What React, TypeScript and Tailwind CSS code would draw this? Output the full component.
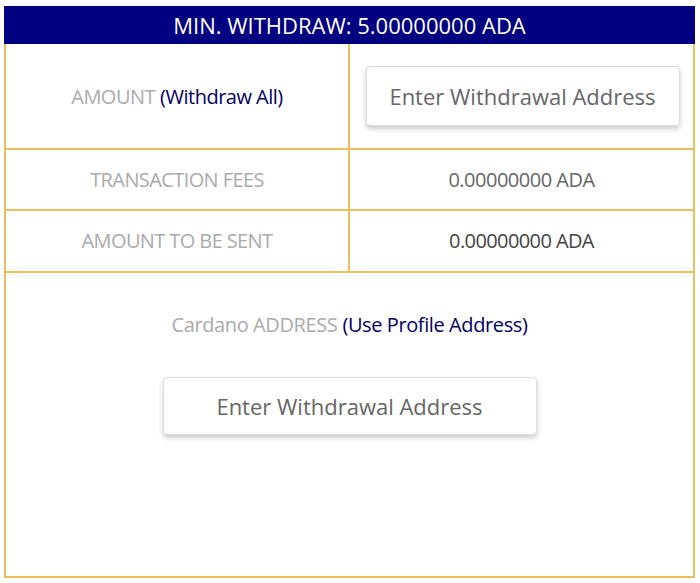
import React from "react";

const font = { fontFamily: '"Open Sans", "Noto Sans", sans-serif' };

export default function App() {
  return (
    <div className="bg-white w-[700px] h-[583px] pt-[6px] pl-[4px]" style={font}>
      <div className="w-[691px]">
        <div className="h-[38px] bg-[#000080] flex items-center justify-center text-white text-[22px] tracking-[0px]">
          MIN. WITHDRAW: 5.00000000 ADA
        </div>
        <div className="border-2 border-t-0 border-[#eebf5e]">
          <div className="grid grid-cols-[344px_1fr] border-b-2 border-[#eebf5e] h-[106px]">
            <div className="border-r-2 border-[#eebf5e] flex items-center justify-center text-[20px] tracking-[-0.5px] pt-[2px]">
              <span className="text-[#aaaaaa]">AMOUNT</span>
              <span className="text-[#000066] font-medium ml-[5px] tracking-[-0.5px]">(Withdraw All)</span>
            </div>
            <div className="flex items-center justify-center">
              <div className="w-[314px] h-[60px] rounded-[4px] border border-[#dddddd] bg-white shadow-[0_3px_5px_rgba(0,0,0,0.2)] flex items-center justify-center text-[22px] text-[#666666] ml-[2px]">
                Enter Withdrawal Address
              </div>
            </div>
          </div>
          <div className="grid grid-cols-[344px_1fr] border-b-2 border-[#eebf5e] h-[61px]">
            <div className="border-r-2 border-[#eebf5e] flex items-center justify-center text-[20px] text-[#aaaaaa] tracking-[-0.6px]">
              TRANSACTION FEES
            </div>
            <div className="flex items-center justify-center text-[20px] text-[#666666] tracking-[-0.5px]">
              0.00000000 ADA
            </div>
          </div>
          <div className="grid grid-cols-[344px_1fr] border-b-2 border-[#eebf5e] h-[62px]">
            <div className="border-r-2 border-[#eebf5e] flex items-center justify-center text-[20px] text-[#aaaaaa] tracking-[-0.6px]">
              AMOUNT TO BE SENT
            </div>
            <div className="flex items-center justify-center text-[20px] text-[#444444] font-medium tracking-[-0.6px]">
              0.00000000 ADA
            </div>
          </div>
          <div className="h-[303px] flex flex-col items-center pt-[37px]">
            <div className="text-[20px] tracking-[-0.4px]">
              <span className="text-[#aaaaaa]">Cardano ADDRESS</span>
              <span className="text-[#000066] font-medium ml-[5px] tracking-[-0.4px]">(Use Profile Address)</span>
            </div>
            <div className="mt-[37px] w-[374px] h-[58px] rounded-[4px] border border-[#dddddd] bg-white shadow-[0_3px_5px_rgba(0,0,0,0.2)] flex items-center justify-center text-[22px] text-[#666666]">
              Enter Withdrawal Address
            </div>
          </div>
        </div>
      </div>
    </div>
  );
}
